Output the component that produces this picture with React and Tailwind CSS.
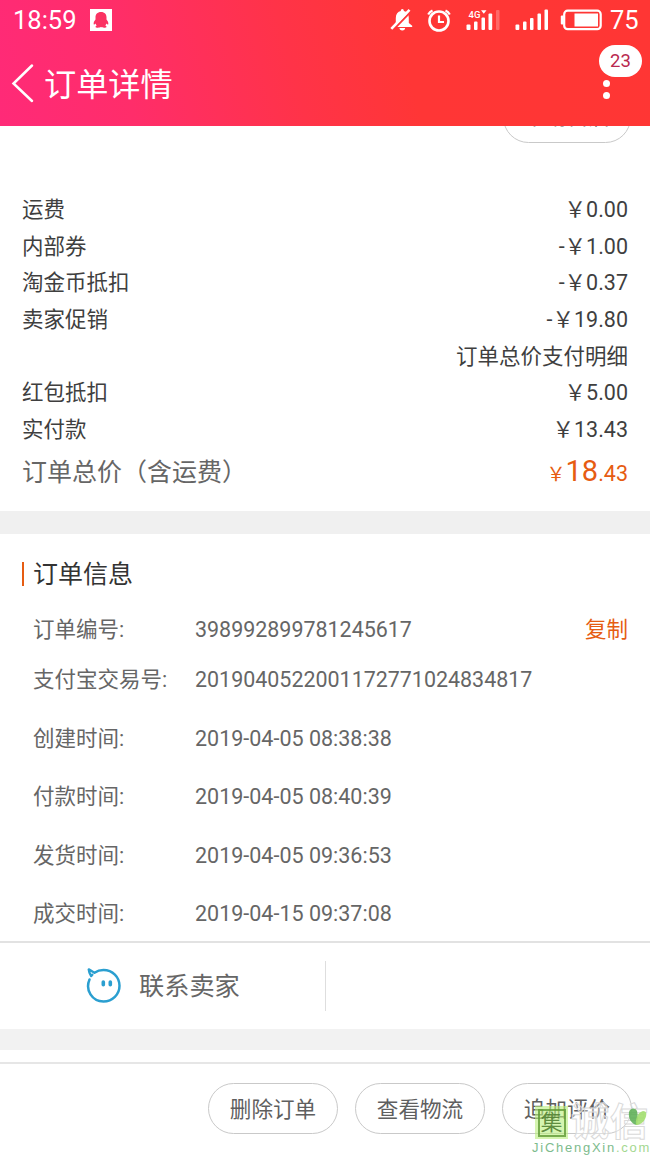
const prices = [
  { label: '运费', value: '￥0.00' },
  { label: '内部券', value: '-￥1.00' },
  { label: '淘金币抵扣', value: '-￥0.37' },
  { label: '卖家促销', value: '-￥19.80' },
  { label: '', value: '订单总价支付明细' },
  { label: '红包抵扣', value: '￥5.00' },
  { label: '实付款', value: '￥13.43' },
];

const times = [
  { label: '创建时间:', value: '2019-04-05 08:38:38' },
  { label: '付款时间:', value: '2019-04-05 08:40:39' },
  { label: '发货时间:', value: '2019-04-05 09:36:53' },
  { label: '成交时间:', value: '2019-04-15 09:37:08' },
];

const StatusBar = () => (
  <div className="flex h-10 items-center pl-[13px] pr-3">
    <span className="w-[77px] text-[25.5px] leading-[41px] whitespace-nowrap">18:59</span>
    <svg className="h-[22px] w-[22px]" viewBox="0 0 22 22">
      <rect width="22" height="22" fill="#fff" />
      <path d="M11 3c-3.700 0-5.500 2.300-5.500 5.200v2.300C4.200 12 3.400 13.700 3.700 15.200c.3.700 1.200.2 1.900-.6.200.8.500 1.400 1.100 2-.7.300-1.200.7-1.200 1.300 0 1 4 1.100 5.500.2 1.500.9 5.500.8 5.500-.2 0-.6-.5-1-1.200-1.300.6-.6.900-1.200 1.100-2 .7.800 1.600 1.300 1.900.6.300-1.500-.5-3.200-1.800-4.700V8.200C16.500 5.300 14.700 3 11 3z" fill="#fb3262" />
    </svg>
    <svg className="ml-auto h-7 w-[220px]" viewBox="0 0 220 28" fill="none">
      {/* bell off */}
      <path d="M3.800 21v-1.500l2-2.500v-5c0-3.700 2-6.200 5-6.900V4.500a1.500 1.500 0 0 1 3 0v.6c3.200.7 5 3.200 5 6.900v5l3.400 2.800V21zM9.500 22h5.600a2.800 2.400 0 0 1-5.600 0z" fill="#fff" />
      <path d="M2.500 24.500 20.800 5.500" stroke="#ff3538" strokeWidth="2.200" />
      <path d="M1.300 22.800 19.500 3.800" stroke="#fff" strokeWidth="2.600" />
      {/* alarm */}
      <circle cx="49" cy="15" r="9.500" stroke="#fff" strokeWidth="2.600" />
      <path d="M49 9.500V16h5" stroke="#fff" strokeWidth="2.200" />
      <path d="M38.200 8.500a10 10 0 0 1 4.300-4M55.500 4.500a10 10 0 0 1 4.300 4" stroke="#fff" strokeWidth="2.200" />
      {/* sim 1 */}
      <text x="78.500" y="11.500" fontSize="9.500" fontFamily="Roboto, sans-serif" fontWeight="500" fill="#fff">4G</text>
      <path d="M91 4.300h5.500l-2.700 3.400z" fill="#fff" />
      <g fill="#fff">
        <rect x="76.500" y="18.500" width="4" height="5.500" rx="1" />
        <rect x="84" y="15.500" width="3.500" height="8.500" rx="1" />
        <rect x="91.500" y="11.500" width="3.500" height="12.500" rx="1" />
        <rect x="98.500" y="7.500" width="3.700" height="16.500" rx="1" />
        <rect x="106" y="4" width="3.500" height="20" rx="1" opacity=".25" />
        {/* sim 2 */}
        <rect x="125.500" y="18.500" width="3.800" height="5.500" rx="1" />
        <rect x="133" y="15.500" width="3.500" height="8.500" rx="1" />
        <rect x="140" y="12" width="3.500" height="12" rx="1" />
        <rect x="147.500" y="7.500" width="3.500" height="16.500" rx="1" />
        <rect x="154.500" y="3.500" width="3.500" height="20.500" rx="1" />
      </g>
      {/* battery */}
      <rect x="174.200" y="4.700" width="36.500" height="18.500" rx="3.500" stroke="#fff" strokeWidth="2.200" />
      <rect x="170.800" y="9.500" width="3" height="9" rx="1" fill="#fff" />
      <rect x="184.500" y="7.500" width="23.500" height="13" fill="#fff" />
    </svg>
    <span className="w-[28px] text-[25.5px] leading-[41px] whitespace-nowrap">75</span>
  </div>
);

const Header = () => (
  <header className="h-[126px] bg-linear-[75deg,#ff2a78_0%,#ff2d6a_20%,#ff3348_45%,#ff3636_62%,#ff3634_100%] text-white">
    <StatusBar />
    <div className="flex h-[86px] items-center pl-[11px] pr-2">
      <svg className="h-10 w-[23px]" viewBox="0 0 23 40" fill="none" stroke="#fff" strokeWidth="2.500" strokeLinecap="round">
        <path d="M21 2.500 2.500 20.500l18.500 17.500" />
      </svg>
      <h1 className="ml-2.5 pt-[3px] text-[32.2px] leading-[86px] font-normal">订单详情</h1>
      <div className="ml-auto flex flex-col items-end self-start pt-[5px]">
        <span className="flex h-8 w-[43px] items-center justify-center rounded-full bg-white pt-0.5 text-[18.5px] text-[#b9294f]">23</span>
        <div className="mr-8 mt-[3px] flex flex-col gap-[5px]">
          <i className="block h-[7px] w-[7px] rounded-full bg-white" />
          <i className="block h-[7px] w-[7px] rounded-full bg-white" />
        </div>
      </div>
    </div>
  </header>
);

const PillButton = ({ children }) => (
  <button className="h-[51px] w-[130px] rounded-full border border-[#c9c9c9] pt-px text-[21.6px] leading-[49px] text-[#5f5f5f]">
    {children}
  </button>
);

const Watermark = () => (
  <div className="absolute bottom-0 right-0 w-[118px]">
    <div className="flex h-[35px] items-center pl-[3px]">
      <div className="flex h-[33px] w-[33px] shrink-0 items-center justify-center bg-[#b9ef7c]/60">
        <span className="flex h-[28px] w-[28px] items-center justify-center border-2 border-[#5f9a35]/80 text-[22px] leading-none text-[#4f7f30]/90">集</span>
      </div>
      <span className="ml-[3px] text-[38px] leading-[35px] font-bold tracking-[1px] whitespace-nowrap text-white/40 [-webkit-text-stroke:1px_#dadada]">诚信</span>
      <svg className="absolute right-[3px] top-0.5 h-5 w-[19px]" viewBox="0 0 19 20">
        <path d="M9 18C3 17 0 11 1 5c1-4 6-5 8-1 1 4 1 9 0 14z" fill="#58ad50" opacity=".85" />
        <path d="M8 18c-1-6 2-13 7-14 4 0 4 4 2 8s-6 6-9 6z" fill="#a3df6f" opacity=".9" />
      </svg>
    </div>
    <p className="h-[15px] text-[13px] leading-[16px] font-medium tracking-[1.750px] whitespace-nowrap text-[#7dbb8d] font-[Liberation_Sans,sans-serif]">
      JiChengXin<span className="text-[#a4d890]">.com</span>
    </p>
  </div>
);

const App = () => {
  return (
    <div className="relative flex h-[1155px] w-[650px] flex-col overflow-hidden bg-white font-[Roboto,'Noto_Sans_CJK_SC',sans-serif]">
      <Header />

      {/* 价格明细 */}
      <section className="h-[385px] overflow-hidden pl-[22px] pr-[22px]">
        <div className="-mr-[3px] -mt-[34px] flex h-[100px] items-start justify-end">
          <button className="h-[51px] w-[128px] rounded-full border border-[#c9c9c9] pb-px text-[21.6px] leading-[48px] text-[#5f5f5f]">
            申请售后
          </button>
        </div>
        {prices.map((item) => (
          <div key={item.value} className="flex h-[36.700px] justify-between text-[21.5px] leading-[36.700px] text-[#3f3f3f]">
            <span>{item.label}</span>
            <span>{item.value}</span>
          </div>
        ))}
        <div className="flex h-12 items-baseline justify-between leading-[44px] text-[#666]">
          <span className="text-[25px]">订单总价（含运费）</span>
          <span className="text-[21.5px] text-[#e65c12]">
            <span className="text-[19px]">￥</span>
            <span className="text-[29px]">18</span>.43
          </span>
        </div>
      </section>

      <div className="h-[23px] bg-[#f0f0f0]" />

      {/* 订单信息 */}
      <section className="h-[407px] pl-[22px] pr-[22px] pt-[1px] text-[21.5px] text-[#666]">
        <div className="flex h-[78px] items-center">
          <i className="block h-6 w-[2px] bg-[#e65c12]" />
          <h2 className="ml-[9px] pt-px text-[25px] font-normal text-[#333]">订单信息</h2>
        </div>
        <div className="flex h-[35px] items-center pl-[11px]">
          <span className="w-[162px]">订单编号:</span>
          <span className="text-[21.450px]">398992899781245617</span>
          <span className="ml-auto text-[#e65c12]">复制</span>
        </div>
        <div className="mt-[15px] flex h-[35px] items-center pl-[11px]">
          <span className="w-[162px]">支付宝交易号:</span>
          <span className="text-[21.450px]">2019040522001172771024834817</span>
        </div>
        <div className="pt-[12px]">
          {times.map((item) => (
            <div key={item.label} className="flex h-[58.400px] items-center pl-[11px]">
              <span className="w-[162px]">{item.label}</span>
              <span>{item.value}</span>
            </div>
          ))}
        </div>
      </section>

      {/* 联系卖家 */}
      <section className="flex h-[88px] items-center border-t-2 border-[#e2e2e2]">
        <div className="flex h-[50px] w-[326px] items-center border-r border-[#dedede] pl-[86px]">
          <svg className="h-9 w-9" viewBox="0 0 36 36" fill="none" stroke="#2b9fd0" strokeWidth="2.500" strokeLinecap="round" strokeLinejoin="round">
            <path d="M3.500 11.500C-1 22 6 33.500 17.500 33.500c9 0 16-7 16-15.700S26.500 2 17.500 2c-3.500 0-6.500 1-9 2.700C6.500 4 5 2.500 2.800 1.500c.2 2.500 1 4.500 2.400 6.500l1-1.200" />
            <path d="M17.300 14v2.800M24.300 14v2.800" strokeWidth="3.600" />
          </svg>
          <span className="ml-[17px] pt-0.5 text-[25.2px] text-[#666]">联系卖家</span>
        </div>
      </section>

      <div className="h-[21px] bg-[#f2f2f2]" />

      <footer className="mt-3 flex h-[93px] items-start justify-end gap-[17px] border-t-2 border-[#e6e6e6] pr-[18px] pt-[19px]">
        <PillButton>删除订单</PillButton>
        <PillButton>查看物流</PillButton>
        <PillButton>追加评价</PillButton>
      </footer>

      <Watermark />
    </div>
  );
};

export default App;
